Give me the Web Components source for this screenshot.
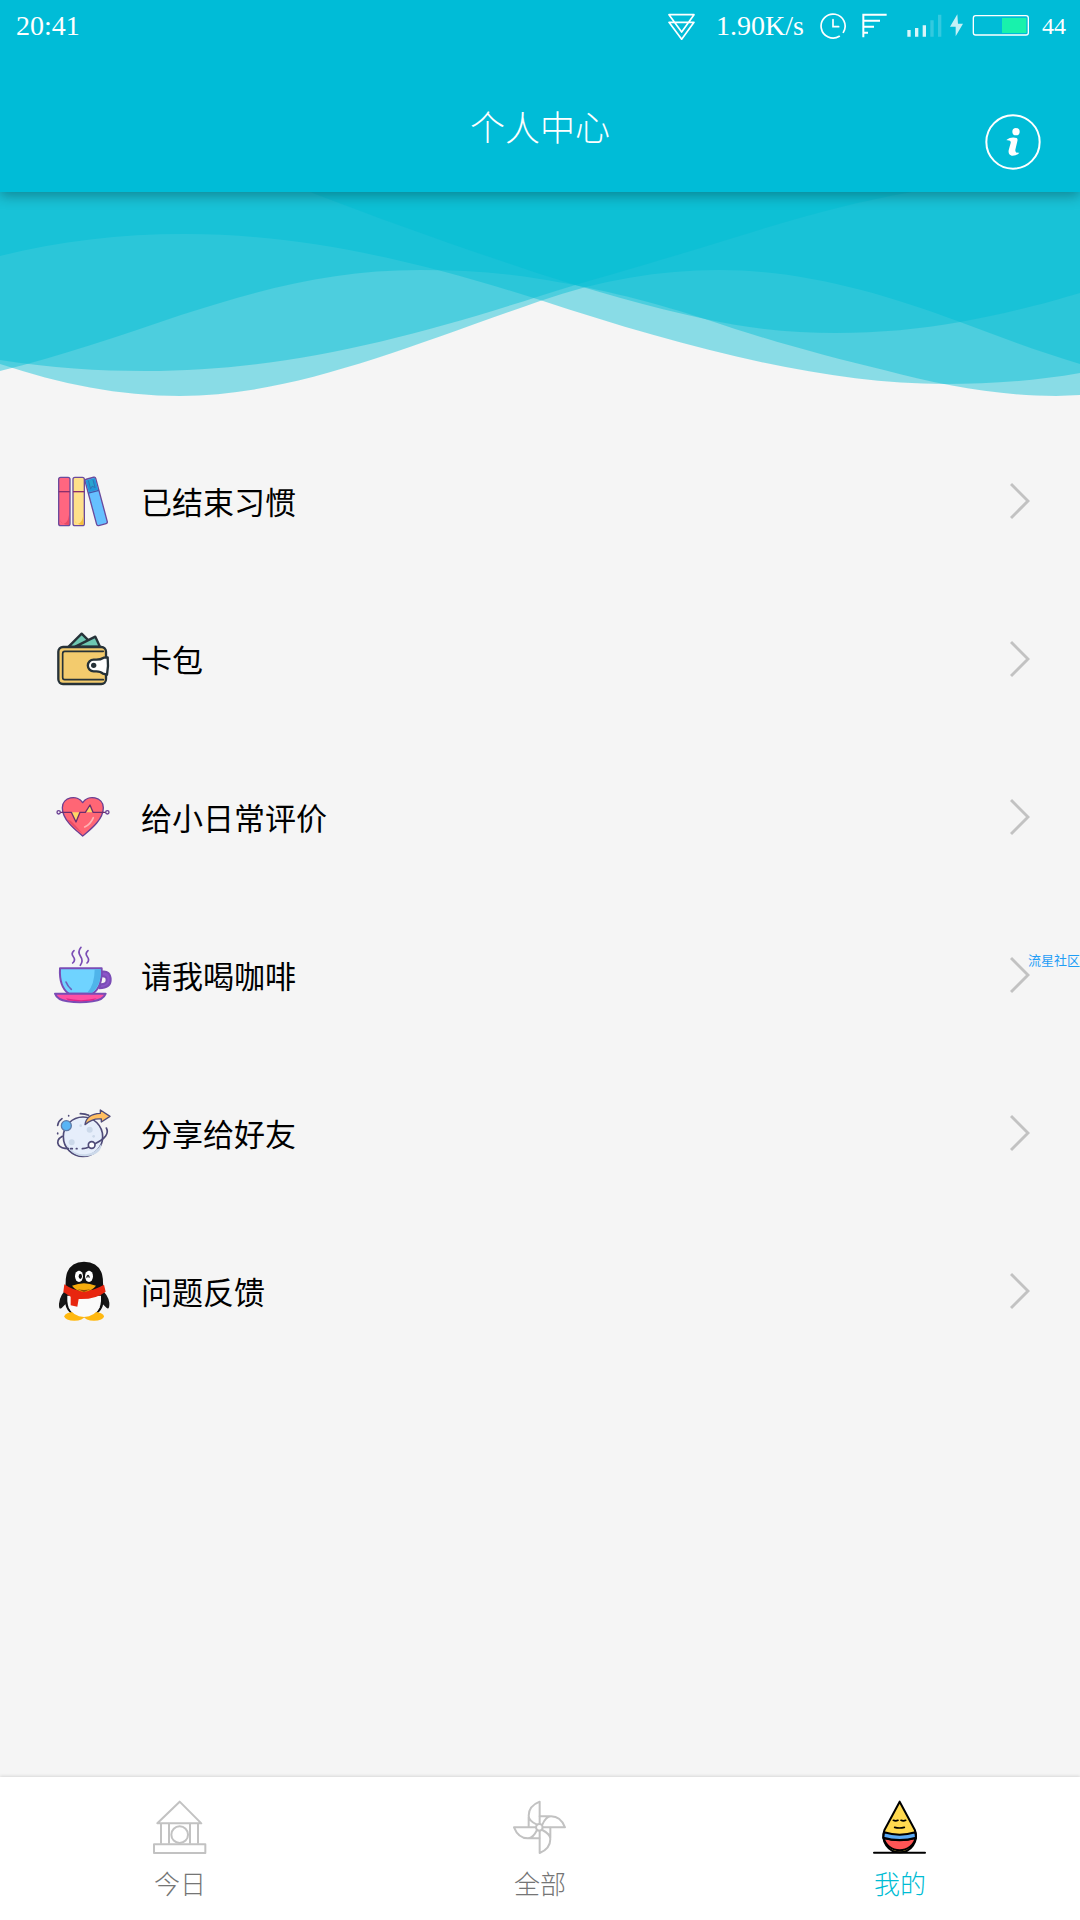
<!DOCTYPE html>
<html lang="zh-CN">
<head>
<meta charset="utf-8">
<meta name="viewport" content="width=device-width, initial-scale=1">
<title>个人中心</title>
<style>
  body {
    margin: 0;
    background: #f5f5f5;
    color: #000;
    font-family: "Noto Sans CJK SC", sans-serif;
    font-weight: 300;
  }
</style>
</head>
<body>
<profile-page>
  <status-bar slot="status" time="20:41" speed="1.90K/s" battery="44"></status-bar>
  <title-bar slot="header">个人中心</title-bar>

  <menu-item href="#finished">
    <svg slot="icon" viewBox="30 33 180 180" fill="none" stroke="#6a4a9c" stroke-width="4" stroke-linejoin="round" aria-hidden="true">
      <rect x="56" y="52" width="34" height="145" rx="6" fill="#ff6680"/>
      <path d="M59 175q2 20 28 20V165q-4 26-16 26-10 0-12-16z" fill="#e84a66" stroke="none"/>
      <path d="M56 95h34" stroke="#8a2f6d"/>
      <rect x="99" y="52" width="34" height="145" rx="6" fill="#ffe08a"/>
      <path d="M102 175q2 20 28 20V165q-4 26-16 26-10 0-12-16z" fill="#f5bf3c" stroke="none"/>
      <path d="M99 95h34" stroke="#8a2f6d"/>
      <g transform="translate(134 59) rotate(-15)">
        <rect width="33" height="144" rx="5" fill="#66c0ff"/>
        <path d="M2 3H31V40H2z" fill="#2496d8" stroke="none"/>
        <path d="M0 42H33" stroke="#4457a8"/>
        <path d="M10 6v25l7-6 7 6V6" stroke="#2f75b5" fill="#2aa3cf" stroke-width="3"/>
      </g>
    </svg>
    已结束习惯
  </menu-item>

  <menu-item href="#cards">
    <svg slot="icon" viewBox="30 507 180 180" fill="none" stroke="#263238" stroke-width="7" stroke-linejoin="round" stroke-linecap="round" aria-hidden="true">
      <path d="M86 560l39-39 24 24-20 16z" fill="#6fc7b2"/>
      <path d="M106 560l60-30 14 30z" fill="#6fc7b2"/>
      <rect x="55" y="561" width="143" height="111" rx="14" fill="#f3cb6d"/>
      <path d="M190 574H74q-6 0-6 7v71q0 7 6 7h116" stroke-width="5"/>
      <path d="M203 592l-12 1q-9 6-22 6h-8a17 17 0 0 0 0 35h8q13 0 20 7l12 3q5-25 2-52z" fill="#fff"/>
      <circle cx="161" cy="616" r="8" fill="#263238" stroke="none"/>
    </svg>
    卡包
  </menu-item>

  <menu-item href="#rate">
    <svg slot="icon" viewBox="30 21 180 180" fill="none" stroke="#6a3f93" stroke-width="4" stroke-linejoin="round" stroke-linecap="round" aria-hidden="true">
      <path d="M128 168C112 154 67 122 67 83C67 51 112 42 128 68C144 42 190 51 190 83C190 122 144 154 128 168z" fill="#ff6675"/>
      <path d="M80 118q20 25 48 44-20-26-36-40z" fill="#e94c65" stroke="none"/>
      <path d="M94 97l14 27 12-27z" fill="#ffd766" stroke="none"/>
      <path d="M136 97l14-22 9 22z" fill="#ffd766" stroke="none"/>
      <path d="M62 97H94L108 126 120 97H136L150 75 159 97H196" stroke="#6c2e6d"/>
      <circle cx="56" cy="97" r="5"/><circle cx="202" cy="97" r="5"/>
      <path d="M134 141q18-8 26-28" stroke="#ffb4b4" stroke-width="5"/>
    </svg>
    给小日常评价
  </menu-item>

  <menu-item href="#coffee">
    <svg slot="icon" viewBox="30 495 180 180" fill="none" stroke="#7a4cb5" stroke-width="6" stroke-linejoin="round" stroke-linecap="round" aria-hidden="true">
      <path d="M102 512q-10 9-2 18 8 10-2 19M123 502q-11 13-2 26 10 14 0 28M144 512q-10 9-2 18 8 10-1 19" stroke-width="5"/>
      <path d="M184 575q28-5 28 25 0 24-34 25l4-12q18 0 18-13 0-13-16-11z" fill="#8b55c9"/>
      <path d="M60 565H185Q188 620 158 641H86Q57 620 60 565z" fill="#6fd3ff"/>
      <path d="M164 568h18q3 48-26 70h-14q22-24 22-70z" fill="#4fb4ea" stroke="none"/>
      <path d="M78 606q5 13 16 22" stroke="#6b61bd" stroke-width="5"/>
      <path d="M45 641H197Q190 660 158 664q-38 6-76 0Q52 660 45 641z" fill="#ff4fa4"/>
      <path d="M78 655q45 11 92 0l-10 6q-38 6-76 0z" fill="#e0248a" stroke="none"/>
    </svg>
    请我喝咖啡
  </menu-item>

  <menu-item href="#share">
    <svg slot="icon" viewBox="30 39 180 180" fill="none" stroke="#4f4b78" stroke-width="5" stroke-linejoin="round" stroke-linecap="round" aria-hidden="true">
      <circle cx="129" cy="140" r="59" fill="#e6eefb"/>
      <g fill="#ccd9ea" stroke="none">
        <circle cx="149" cy="119" r="9"/><circle cx="95" cy="157" r="9"/><circle cx="161" cy="139" r="4"/><circle cx="122" cy="107" r="4"/>
        <path d="M77 159q22 36 60 34 32-4 47-32 2 30-40 37-48 6-67-39z"/>
      </g>
      <path d="M67 139q-20 11-11 27 7 10 29 10M92 176h5M109 176h2M127 176q10 0 18-4M165 161q47-23 34-47M53 106q2-13 13-20M53 131v-2M86 78v-1M121 71q15 0 25 5"/>
      <circle cx="155" cy="165" r="10" fill="#fff"/>
      <circle cx="79" cy="107" r="15" fill="#58b5f5" stroke="#5f7ba8" stroke-width="4"/>
      <path d="M135 104Q139 72 181 70V60L210 79 184 96V87Q158 84 135 104z" fill="#ffbf62" stroke-width="4"/>
    </svg>
    分享给好友
  </menu-item>

  <menu-item href="#feedback">
    <svg slot="icon" viewBox="30 513 180 180" aria-hidden="true">
      <path d="M80 598Q60 614 57 641q-1 20 8 13l18-18zM183 598Q204 614 208 638q1 22-8 16l-18-18z" fill="#171717"/>
      <path d="M132 515Q189 517 189 577L192 626Q190 680 132 682 75 680 74 626L77 577Q77 517 132 515z" fill="#111"/>
      <path d="M82 617Q78 678 132 680 187 678 183 617z" fill="#fafafa"/>
      <ellipse cx="103" cy="679" rx="30" ry="13" fill="#ffb810"/>
      <ellipse cx="162" cy="679" rx="30" ry="13" fill="#ffb810"/>
      <path d="M85 650Q100 680 132 681 164 680 180 650z" fill="#fafafa"/>
      <path d="M73 583Q127 622 192 584L197 605Q167 629 116 627L112 650 92 646 92 620 70 606z" fill="#e8260f"/>
      <ellipse cx="117" cy="559" rx="12" ry="17" fill="#fff"/>
      <ellipse cx="147" cy="559" rx="12" ry="17" fill="#fff"/>
      <ellipse cx="121" cy="559" rx="5" ry="8" fill="#111"/>
      <path d="M140 563q4-14 8 0" fill="none" stroke="#111" stroke-width="4"/>
      <path d="M96 587Q132 572 168 587 158 601 132 606 105 601 96 587z" fill="#f6ac0d"/>
      <path d="M112 597q20 6 40 0l-20 9z" fill="#8d4a08"/>
    </svg>
    问题反馈
  </menu-item>

  <water-mark slot="overlay">流星社区</water-mark>

  <tab-item slot="tabs" href="#today">
    <svg slot="icon" viewBox="99 121 162 162" fill="none" stroke="#c2c2c2" stroke-width="6" stroke-linejoin="round" aria-hidden="true">
      <path d="M179 126L244 191H112zM123 192V252M147 192V252M210 192V252M234 192V252"/>
      <circle cx="179" cy="225" r="25"/>
      <rect x="102" y="254" width="154" height="26"/>
    </svg>
    今日
  </tab-item>
  <tab-item slot="tabs" href="#all">
    <svg slot="icon" viewBox="99 121 162 162" fill="none" stroke="#c2c2c2" stroke-width="6" stroke-linejoin="round" stroke-linecap="round" aria-hidden="true">
      <circle cx="178" cy="203" r="10"/>
      <path d="M179 193V126Q146 139 146 168 146 183 171 195M146 172V202"/>
      <path d="M188 203H255Q242 170 213 170 198 170 187 195M209 170H179"/>
      <path d="M179 213V280Q211 267 211 238 211 223 187 211M211 234V204"/>
      <path d="M168 203H102Q115 236 144 236 159 236 171 211M148 236H178"/>
    </svg>
    全部
  </tab-item>
  <tab-item slot="tabs" href="#mine" current>
    <svg slot="icon" viewBox="99 121 162 162" fill="none" stroke="#000" stroke-width="6" stroke-linejoin="round" stroke-linecap="round" aria-hidden="true">
      <path d="M179 126L133 212A49 49 0 1 0 225 212z" fill="#ffd94f"/>
      <path d="M131 235Q179 248 227 235A49 46 0 0 1 131 235z" fill="#ff5555"/>
      <path d="M132 218Q179 232 226 218L228 234Q179 248 130 234z" fill="#5aaaf5"/>
      <path d="M160 182q7 3 14 0M183 182q7 3 14 0M164 203q14 4 29 0" stroke-width="5"/>
      <path d="M102 279H255"/>
    </svg>
    我的
  </tab-item>
</profile-page>

<script>
  const define = (name, html, setup) => {
    const template = document.createElement('template');
    template.innerHTML = html;
    customElements.define(name, class extends HTMLElement {
      constructor() {
        super();
        this.attachShadow({ mode: 'open' }).append(template.content.cloneNode(true));
      }
      connectedCallback() {
        if (setup) setup(this, this.shadowRoot);
      }
    });
  };

  define('status-bar', `
    <style>
      :host {
        display: flex; align-items: center; gap: 16px;
        height: 52px; padding: 0 14px 0 16px;
        color: #fff; font: 28px/52px "Liberation Serif", serif;
      }
      .time { margin-right: auto; }
      .power { display: flex; align-items: center; gap: 8px; margin-left: 3px; }
      .level { margin-left: 4px; font-size: 24px; }
      svg { display: block; height: 28px; fill: none; stroke: #fff; }
    </style>
    <span class="time"></span>
    <svg width="32" viewBox="81 36 96 84" stroke-width="5" stroke-linejoin="round"><path d="M84 44H159L122 96zM84 67H159L122 118z"/></svg>
    <span class="speed"></span>
    <svg width="26" viewBox="536 36 78 84" stroke-width="5" stroke-linecap="round"><path d="M606 97A36 36 0 1 0 594 109M575 59V80H592"/></svg>
    <svg width="26" viewBox="666 36 78 84" stroke-width="6"><path d="M670 112V42M667 44H740M670 62H720M670 80H702M670 98H684"/></svg>
    <span class="power">
      <svg width="35" viewBox="800 36 105 84" stroke-width="10"><path d="M806 90V110M829 84V110M852 76V110" opacity=".85"/><path d="M875 61V110M898 44V110" opacity=".2"/></svg>
      <svg width="14" viewBox="931 36 42 84"><path d="M953 43L931 80H948V109L970 71H955z" fill="#c5f0f6" stroke="none"/></svg>
      <svg width="58" viewBox="996 36 174 84" stroke-width="4"><rect x="1000" y="47" width="165" height="58" rx="7"/><path d="M1086 54H1159V99H1086z" fill="#18f2ac" stroke="none"/></svg>
      <span class="level"></span>
    </span>
  `, (el, root) => {
    root.querySelector('.time').textContent = el.getAttribute('time');
    root.querySelector('.speed').textContent = el.getAttribute('speed');
    root.querySelector('.level').textContent = el.getAttribute('battery');
  });

  define('title-bar', `
    <style>
      :host {
        display: grid; grid-template-columns: 1fr auto 1fr; align-items: end;
        box-sizing: border-box; height: 140px; padding: 0 38px 22px; color: #fff;
      }
      h1 { grid-column: 2; margin: 0 0 16px; font-size: 35px; line-height: 56px; font-weight: 300; }
      button {
        justify-self: end; width: 58px; height: 56px; padding: 0;
        border: 0; background: none; cursor: pointer;
      }
      svg { display: block; width: 58px; height: 56px; }
    </style>
    <h1><slot></slot></h1>
    <button type="button" aria-label="关于">
      <svg viewBox="1032 344 174 168" fill="#fff">
        <circle cx="1119" cy="428" r="80" fill="none" stroke="#fff" stroke-width="6"/>
        <circle cx="1128" cy="397" r="11"/>
        <path d="M1100 421Q1112 412 1130 416 1134 418 1132 426L1126 451Q1125 462 1138 460 1130 470 1115 469 1104 466 1106 453L1112 431Q1114 422 1100 423z"/>
      </svg>
    </button>
  `);

  define('wave-banner', `
    <style>
      :host { display: block; }
      svg { display: block; width: 100%; height: 204px; fill: #00bcd4; fill-opacity: .44; }
    </style>
    <svg viewBox="0 192 1080 204" preserveAspectRatio="none" aria-hidden="true">
      <path d="M0 190V256C60 241 120 234 185 234C310 234 430 265 540 300C680 346 820 384 945 384C990 384 1035 381 1080 373V190z"/>
      <path d="M0 190V364C60 384 120 396 180 396C290 396 400 350 540 301C600 280 660 270 719 270C800 270 880 292 960 322C1000 337 1040 352 1080 364V190z"/>
      <path d="M0 190V371C60 356 120 336 181 315C265 288 335 270 420 270C460 270 500 272 540 279C590 287 640 298 705 319C770 341 825 356 884 370C940 385 1000 396 1056 396L1080 395V190z"/>
      <path d="M0 190V360C50 368 100 371 145 371C280 371 400 341 540 296C600 277 670 258 733 238C800 217 850 203 912 192V190z"/>
      <path d="M305 190C400 227 480 254 540 274C590 290 650 307 705 319C750 329 795 333 836 333C880 333 920 329 960 322C1010 313 1050 302 1080 293V190z"/>
    </svg>
  `);

  define('menu-item', `
    <style>
      :host { display: block; }
      a {
        display: flex; align-items: center; height: 158px; padding: 0 50px;
        color: inherit; text-decoration: none; font-size: 31px; line-height: 48px; font-weight: 400;
      }
      ::slotted(svg) { flex: none; width: 60px; height: 60px; overflow: visible; }
      .label { flex: 1; margin-left: 31px; }
      .chevron { width: 20px; height: 38px; fill: none; stroke: #c2c2c2; stroke-width: 3; }
    </style>
    <a>
      <slot name="icon"></slot>
      <span class="label"><slot></slot></span>
      <svg class="chevron" viewBox="0 0 20 38" aria-hidden="true"><path d="M1 2L18 19 1 36"/></svg>
    </a>
  `, (el, root) => { root.querySelector('a').href = el.getAttribute('href'); });

  define('water-mark', `
    <style>
      :host {
        position: absolute; right: 0; top: 50%; margin-top: -10px;
        color: #1f9df5; font-size: 13px; line-height: 20px; font-weight: 400;
        pointer-events: none; white-space: nowrap;
      }
    </style>
    <slot></slot>
  `);

  define('tab-item', `
    <style>
      :host { display: block; flex: 1; color: #757575; }
      :host([current]) { color: #00bcd4; }
      a {
        display: flex; flex-direction: column; align-items: center; gap: 10px;
        color: inherit; text-decoration: none; font-size: 26px; line-height: 38px;
      }
      ::slotted(svg) { width: 54px; height: 54px; }
    </style>
    <a><slot name="icon"></slot><span><slot></slot></span></a>
  `, (el, root) => {
    const link = root.querySelector('a');
    link.href = el.getAttribute('href');
    if (el.hasAttribute('current')) link.setAttribute('aria-current', 'page');
  });

  define('profile-page', `
    <style>
      :host { display: flex; flex-direction: column; min-height: 100vh; position: relative; }
      header {
        position: relative; z-index: 1;
        background: #00bcd7; box-shadow: 0 4px 12px rgba(0, 0, 0, .3);
      }
      main { flex: 1; }
      .list { padding-top: 26px; }
      nav {
        display: flex; padding: 23px 0 18px; background: #fff;
        box-shadow: 0 -1px 3px rgba(0, 0, 0, .12);
      }
    </style>
    <header>
      <slot name="status"></slot>
      <slot name="header"></slot>
    </header>
    <main>
      <wave-banner></wave-banner>
      <div class="list"><slot></slot></div>
    </main>
    <nav aria-label="主导航"><slot name="tabs"></slot></nav>
    <slot name="overlay"></slot>
  `);
</script>
</body>
</html>
